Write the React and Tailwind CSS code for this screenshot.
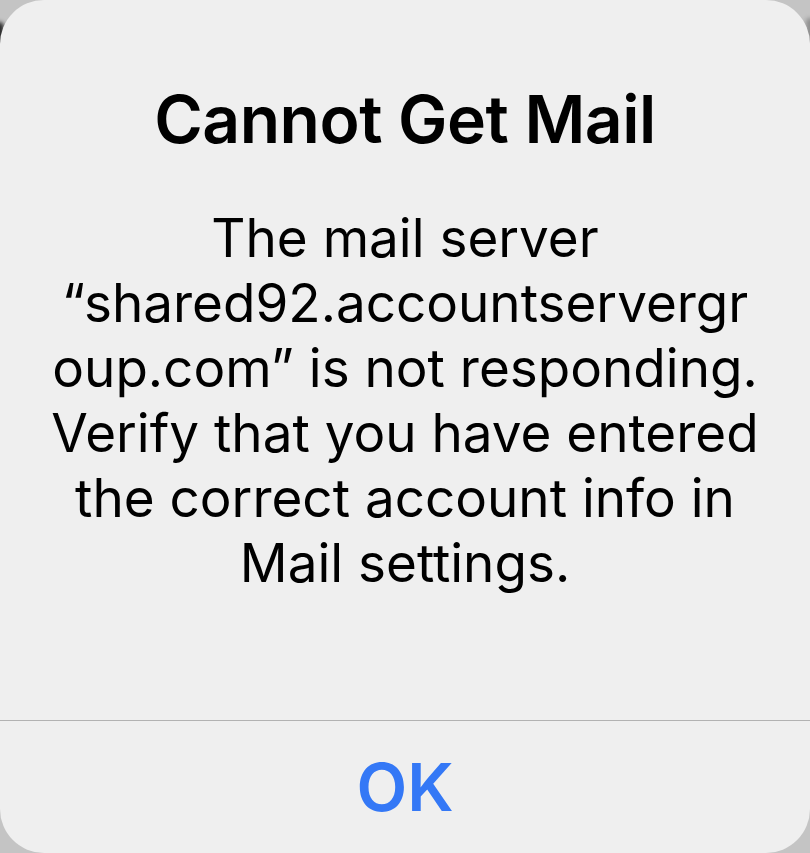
const bodyLines = [
  "The mail server",
  "\u201Cshared92.accountservergr",
  "oup.com\u201D is not responding.",
  "Verify that you have entered",
  "the correct account info in",
  "Mail settings.",
];

export default function App() {
  return (
    <div
      className="relative w-[810px] h-[853px] bg-[#c4c4c4] overflow-hidden"
      style={{ fontFamily: "Inter, 'Noto Sans', sans-serif" }}
    >
      {/* bits of the screen behind the alert */}
      <div className="absolute left-[-6px] top-[22px] w-[10px] h-[30px] rounded-full bg-[#2a2a2a] blur-[2px]" />
      <div className="absolute right-[-4px] top-[18px] w-[8px] h-[26px] rounded-full bg-[#8e8e8e] blur-[2px]" />

      <div className="relative w-full h-full rounded-[44px] bg-[#efefef] flex flex-col">
        <div className="h-[720px] flex flex-col items-center pt-[79px]">
          <h1 className="text-[66px] leading-[80px] font-semibold text-black tracking-[-0.5px]">
            Cannot Get Mail
          </h1>
          <div className="mt-[47px] text-center text-[53px] leading-[65px] text-black">
            {bodyLines.map((l) => (
              <div key={l} className="whitespace-nowrap">
                {l}
              </div>
            ))}
          </div>
        </div>
        <div className="h-px bg-[#b2b2b2]" />
        <div className="flex-1 flex items-center justify-center">
          <span className="text-[66px] font-semibold text-[#3478f6] leading-none">OK</span>
        </div>
      </div>
    </div>
  );
}
